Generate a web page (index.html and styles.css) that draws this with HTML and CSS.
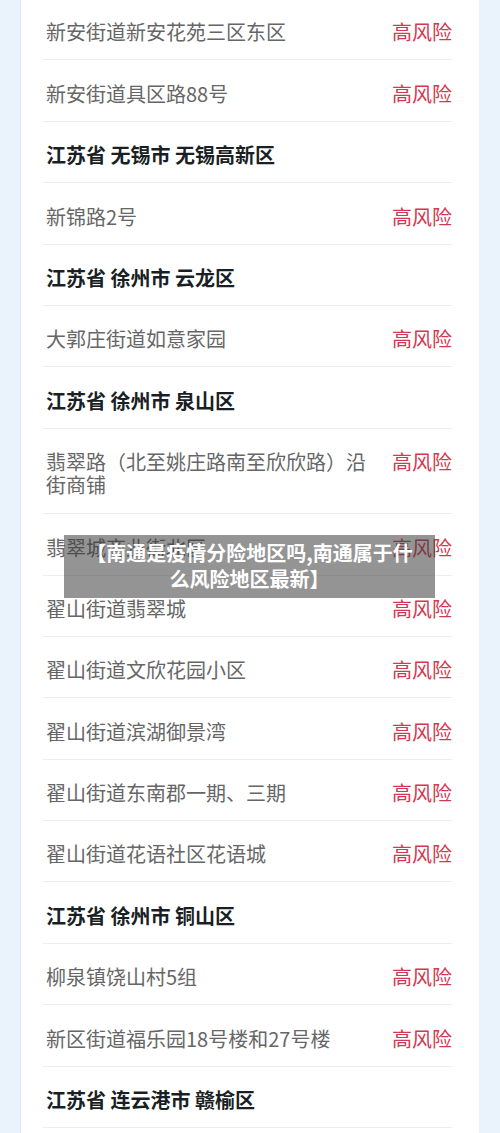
FILE: index.html
```html
<!DOCTYPE html>
<html lang="zh-CN">
<head>
    <meta charset="UTF-8">
    <meta name="viewport" content="width=device-width, initial-scale=1.0">
    <title>南通是疫情分险地区吗</title>
    <link rel="stylesheet" href="styles.css">
</head>
<body>

    <div class="card">
        <div class="row"><span class="name">新安街道新安花苑三区东区</span><span class="risk">高风险</span></div>
        <div class="row"><span class="name">新安街道具区路88号</span><span class="risk">高风险</span></div>
        <div class="row head">江苏省 无锡市 无锡高新区</div>
        <div class="row"><span class="name">新锦路2号</span><span class="risk">高风险</span></div>
        <div class="row head">江苏省 徐州市 云龙区</div>
        <div class="row"><span class="name">大郭庄街道如意家园</span><span class="risk">高风险</span></div>
        <div class="row head">江苏省 徐州市 泉山区</div>
        <div class="row tall"><span class="name">翡翠路（北至姚庄路南至欣欣路）沿街商铺</span><span class="risk">高风险</span></div>
        <div class="row"><span class="name">翡翠城商业街北区</span><span class="risk">高风险</span></div>
        <div class="row"><span class="name">翟山街道翡翠城</span><span class="risk">高风险</span></div>
        <div class="row"><span class="name">翟山街道文欣花园小区</span><span class="risk">高风险</span></div>
        <div class="row"><span class="name">翟山街道滨湖御景湾</span><span class="risk">高风险</span></div>
        <div class="row"><span class="name">翟山街道东南郡一期、三期</span><span class="risk">高风险</span></div>
        <div class="row"><span class="name">翟山街道花语社区花语城</span><span class="risk">高风险</span></div>
        <div class="row head">江苏省 徐州市 铜山区</div>
        <div class="row"><span class="name">柳泉镇饶山村5组</span><span class="risk">高风险</span></div>
        <div class="row"><span class="name">新区街道福乐园18号楼和27号楼</span><span class="risk">高风险</span></div>
        <div class="row head">江苏省 连云港市 赣榆区</div>
    </div>

    <!-- заголовок поверх картинки -->
    <div class="caption">【南通是疫情分险地区吗,南通属于什么风险地区最新】</div>

</body>
</html>
```

FILE: styles.css
```css
body {
    font-family: "Noto Sans CJK SC", "Noto Sans", sans-serif;
    background-color: #eaf3fb;
    margin: 0;
    padding: 0;
    height: 1133px;
    overflow: hidden;
    position: relative;
}

.card {
    background-color: #fff;
    margin: -1px 0 0 20px;
    width: 459px;
    height: 1140px;
    border-left: 1px solid #dde9f4;
    box-sizing: border-box;
    padding: 0 27px 0 22px;
}

.row {
    display: flex;
    justify-content: space-between;
    align-items: flex-start;
    padding: 21.4px 0 15px 3px;
    border-bottom: 1px solid #ededed;
    font-size: 20px;
    line-height: 24px;
}

.tall {
    padding-bottom: 17px;
}

.tall .name {
    line-height: 23px;
}

.name {
    color: #666;
    flex: 1;
    margin-right: 22px;
}

.risk {
    color: #d2384f;
}

.head {
    color: #1a1f25;
    font-weight: 700;
}

.caption {
    position: absolute;
    left: 64px;
    top: 535px;
    width: 371px;
    height: 63px;
    box-sizing: border-box;
    padding: 5px 14px 0;
    background-color: rgba(60, 60, 60, 0.55);
    color: #fff;
    font-size: 20px;
    font-weight: 700;
    line-height: 26px;
    text-align: center;
}
```
